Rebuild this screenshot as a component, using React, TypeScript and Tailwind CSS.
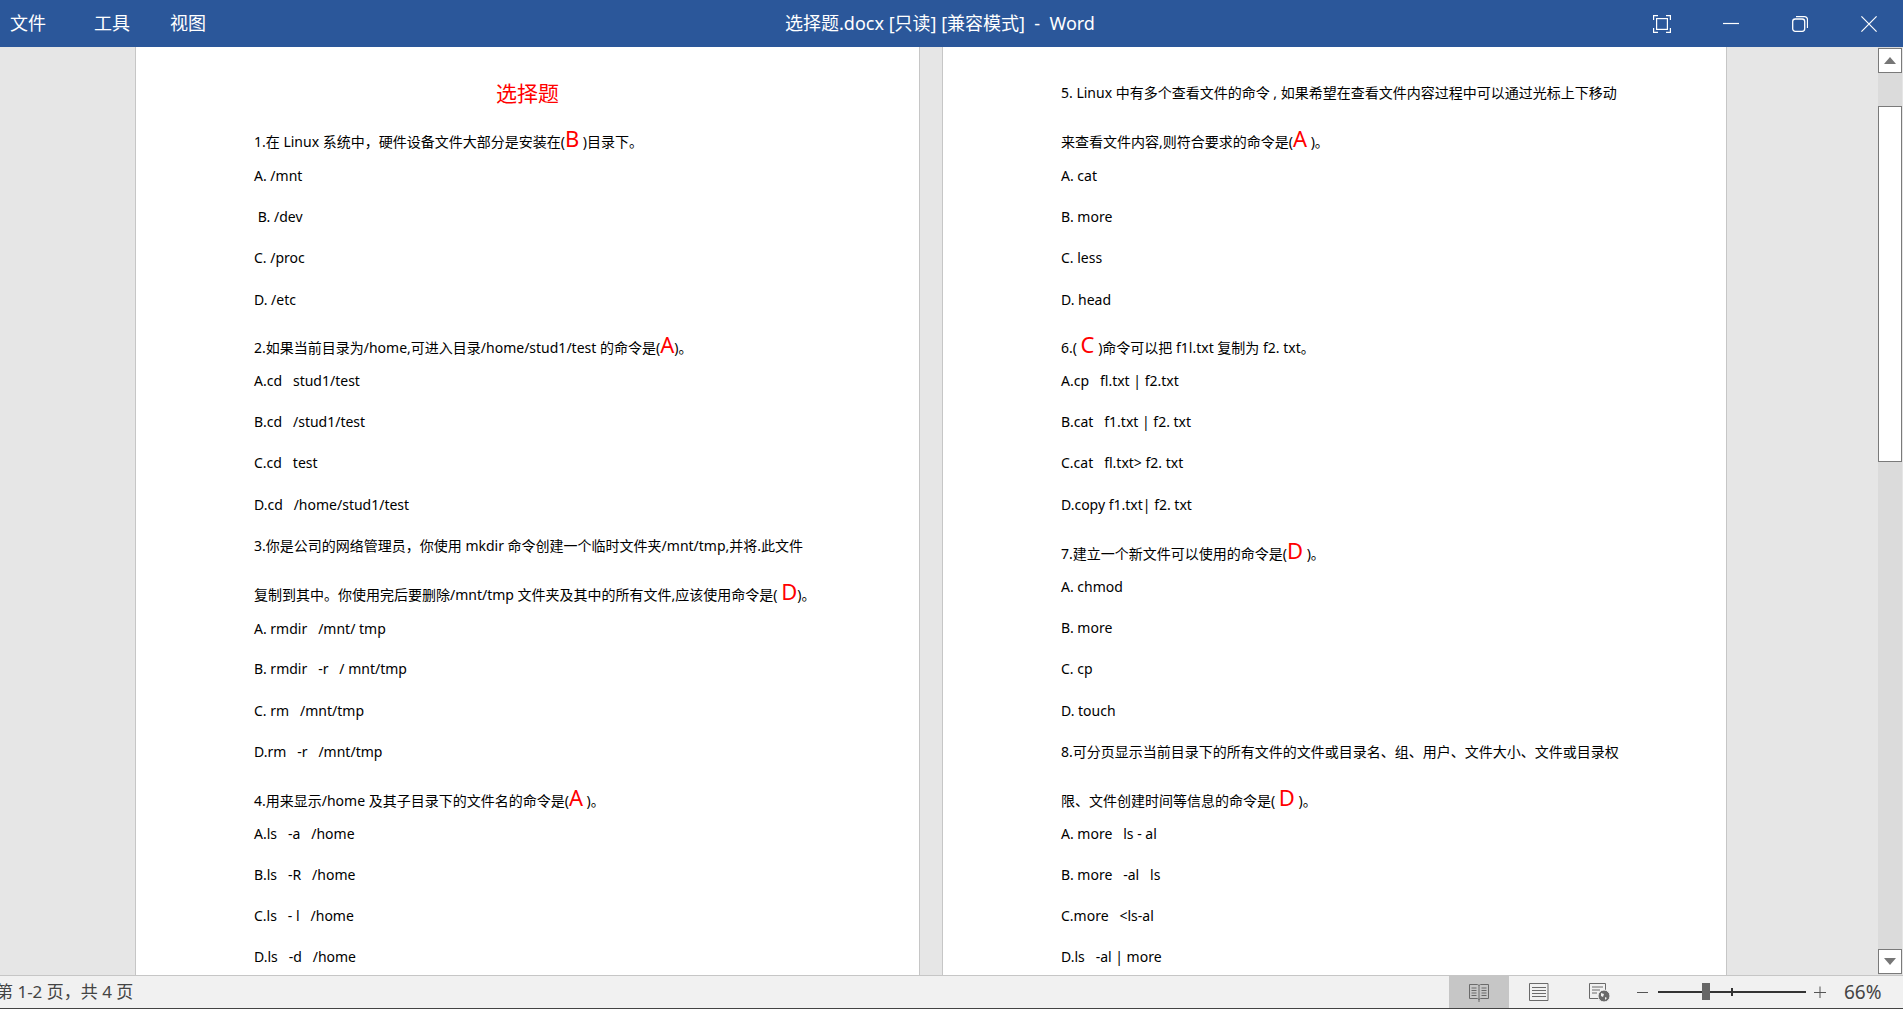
import React from 'react';

type Row = { h: string; text: React.ReactNode };

const Ans = ({ c }: { c: string }) => (
  <span className="text-[22px] leading-none text-[#ff0000]">{c}</span>
);

const leftRows: Row[] = [
  { h: 'h-[39px]', text: <>1.在 Linux 系统中，硬件设备文件大部分是安装在(<Ans c="B" /> )目录下。</> },
  { h: 'h-[41px]', text: 'A. /mnt' },
  { h: 'h-[41px]', text: <>&nbsp;B. /dev</> },
  { h: 'h-[42px]', text: 'C. /proc' },
  { h: 'h-[43px]', text: 'D. /etc' },
  { h: 'h-[38px]', text: <>2.如果当前目录为/home,可进入目录/home/stud1/test 的命令是(<Ans c="A" />)。</> },
  { h: 'h-[41px]', text: <>A.cd &nbsp; stud1/test</> },
  { h: 'h-[41px]', text: <>B.cd &nbsp; /stud1/test</> },
  { h: 'h-[42px]', text: <>C.cd &nbsp; test</> },
  { h: 'h-[41px]', text: <>D.cd &nbsp; /home/stud1/test</> },
  { h: 'h-[44px]', text: '3.你是公司的网络管理员，你使用 mkdir 命令创建一个临时文件夹/mnt/tmp,并将.此文件' },
  { h: 'h-[39px]', text: <>复制到其中。你使用完后要删除/mnt/tmp 文件夹及其中的所有文件,应该使用命令是( <Ans c="D" />)。</> },
  { h: 'h-[40px]', text: <>A. rmdir &nbsp; /mnt/ tmp</> },
  { h: 'h-[42px]', text: <>B. rmdir &nbsp; -r &nbsp; / mnt/tmp</> },
  { h: 'h-[41px]', text: <>C. rm &nbsp; /mnt/tmp</> },
  { h: 'h-[44px]', text: <>D.rm &nbsp; -r &nbsp; /mnt/tmp</> },
  { h: 'h-[38px]', text: <>4.用来显示/home 及其子目录下的文件名的命令是(<Ans c="A" /> )。</> },
  { h: 'h-[41px]', text: <>A.ls &nbsp; -a &nbsp; /home</> },
  { h: 'h-[41px]', text: <>B.ls &nbsp; -R &nbsp; /home</> },
  { h: 'h-[41px]', text: <>C.ls &nbsp; - l &nbsp; /home</> },
  { h: 'h-[41px]', text: <>D.ls &nbsp; -d &nbsp; /home</> },
];

const rightRows: Row[] = [
  { h: 'h-[44px]', text: '5. Linux 中有多个查看文件的命令 , 如果希望在查看文件内容过程中可以通过光标上下移动' },
  { h: 'h-[39px]', text: <>来查看文件内容,则符合要求的命令是(<Ans c="A" /> )。</> },
  { h: 'h-[41px]', text: 'A. cat' },
  { h: 'h-[41px]', text: 'B. more' },
  { h: 'h-[42px]', text: 'C. less' },
  { h: 'h-[43px]', text: 'D. head' },
  { h: 'h-[38px]', text: <>6.( <Ans c="C" /> )命令可以把 f1l.txt 复制为 f2. txt。</> },
  { h: 'h-[41px]', text: <>A.cp &nbsp; fl.txt | f2.txt</> },
  { h: 'h-[41px]', text: <>B.cat &nbsp; f1.txt | f2. txt</> },
  { h: 'h-[42px]', text: <>C.cat &nbsp; fl.txt&gt; f2. txt</> },
  { h: 'h-[44px]', text: 'D.copy f1.txt| f2. txt' },
  { h: 'h-[38px]', text: <>7.建立一个新文件可以使用的命令是(<Ans c="D" /> )。</> },
  { h: 'h-[41px]', text: 'A. chmod' },
  { h: 'h-[41px]', text: 'B. more' },
  { h: 'h-[42px]', text: 'C. cp' },
  { h: 'h-[41px]', text: 'D. touch' },
  { h: 'h-[44px]', text: '8.可分页显示当前目录下的所有文件的文件或目录名、组、用户、文件大小、文件或目录权' },
  { h: 'h-[38px]', text: <>限、文件创建时间等信息的命令是( <Ans c="D" /> )。</> },
  { h: 'h-[41px]', text: <>A. more &nbsp; ls - al</> },
  { h: 'h-[41px]', text: <>B. more &nbsp; -al &nbsp; ls</> },
  { h: 'h-[41px]', text: <>C.more &nbsp; &lt;ls-al</> },
  { h: 'h-[41px]', text: <>D.ls &nbsp; -al | more</> },
];

const DocRows = ({ rows }: { rows: Row[] }) => (
  <>
    {rows.map((r, i) => (
      <div key={i} className={`${r.h} whitespace-nowrap text-[14px] leading-[20px] text-black`}>
        {r.text}
      </div>
    ))}
  </>
);

function TitleBar() {
  return (
    <div className="flex h-[47px] shrink-0 items-center bg-[#2b579a] text-[18px] text-white">
      <div className="flex w-[785px] items-center pl-[10px]">
        <span className="w-[84px]">文件</span>
        <span className="w-[76px]">工具</span>
        <span>视图</span>
      </div>
      <div className="whitespace-pre">选择题.docx [只读] [兼容模式]  -  Word</div>
      <div className="ml-auto flex items-center pr-[26px]">
        <svg width="18" height="18" viewBox="0 0 18 18" fill="none" stroke="white" strokeWidth="1.2">
          <path d="M.6 5V.6H5M13 .6h4.4V5M17.4 13v4.4H13M5 17.4H.6V13" />
          <rect x="3.6" y="3.6" width="10.8" height="10.8" />
        </svg>
        <svg className="ml-[52px]" width="16" height="16" viewBox="0 0 16 16" stroke="white" strokeWidth="1.2">
          <path d="M0 7.5h16" />
        </svg>
        <svg className="ml-[53px]" width="16" height="16" viewBox="0 0 16 16" fill="none" stroke="white" strokeWidth="1.3">
          <rect x=".7" y="3" width="12" height="12.3" rx="2.5" />
          <path d="M4 .7h8.5a3 3 0 0 1 3 3V12" />
        </svg>
        <svg className="ml-[53px]" width="16" height="16" viewBox="0 0 16 16" stroke="white" strokeWidth="1.2">
          <path d="M.4.4l15.2 15.2M15.6.4L.4 15.6" />
        </svg>
      </div>
    </div>
  );
}

function ScrollBar() {
  return (
    <div className="mr-px flex w-[24px] shrink-0 flex-col bg-[#dbdbdb] pt-px">
      <div className="flex h-[25px] items-center justify-center border border-[#7a7a7a] bg-white">
        <svg width="12" height="7" viewBox="0 0 12 7" fill="#767676"><path d="M6 0l6 7H0z" /></svg>
      </div>
      <div className="h-[33px]" />
      <div className="h-[356px] border border-[#7a7a7a] bg-white" />
      <div className="flex-1" />
      <div className="mb-px flex h-[25px] items-center justify-center border border-[#7a7a7a] bg-white">
        <svg width="12" height="7" viewBox="0 0 12 7" fill="#767676"><path d="M6 7L0 0h12z" /></svg>
      </div>
    </div>
  );
}

function StatusBar() {
  return (
    <div className="flex h-[34px] shrink-0 items-center overflow-hidden border-t border-b border-t-[#c6c6c6] border-b-[#444444] bg-[#f1f1f1] text-[#444444]">
      <div className="ml-[-4px] whitespace-nowrap text-[17px]">第 1-2 页，共 4 页</div>
      <div className="ml-auto flex h-full items-center">
        <div className="flex h-full w-[60px] items-center justify-center bg-[#c6c6c6]">
          <svg width="20" height="20" viewBox="0 0 20 20" fill="none" stroke="#6a6a6a">
            <path d="M.5 2.5h8l1.5 1 1.5-1h8v14h-8L10 17.5 8.5 16.5h-8zM10 3.5V20" />
            <path d="M2.5 6h5M2.5 8.5h5M2.5 11h5M2.5 13.5h5M12.5 6h5M12.5 8.5h5M12.5 11h5M12.5 13.5h5" />
          </svg>
        </div>
        <div className="flex w-[60px] items-center justify-center">
          <svg width="20" height="20" viewBox="0 0 20 20" fill="none" stroke="#6a6a6a">
            <path d="M.5 1.5h18.500v17H.5zM3 5.500h14M3 8.500h14M3 11.500h14M3 14.500h14" />
          </svg>
        </div>
        <div className="flex w-[60px] items-center justify-center">
          <svg width="21" height="20" viewBox="0 0 21 20" fill="none" stroke="#6a6a6a">
            <path d="M.5 1.500h16v15H.5zM3 5h11M3 8h8M3 11h5" />
            <circle cx="15" cy="14" r="6" fill="#6a6a6a" stroke="#f1f1f1" />
            <path d="M12 11l3 1-1 3-2-1zM16 15l2 1-2 2z" fill="#f1f1f1" stroke="none" />
          </svg>
        </div>
        <svg className="ml-[8px]" width="12" height="12" viewBox="0 0 12 12" stroke="#555555"><path d="M0 6.500h11" /></svg>
        {/* zoom slider */}
        <div className="relative ml-[9px] h-[18px] w-[148px]">
          <div className="absolute left-0 right-0 top-[8px] h-[2px] bg-[#333333]" />
          <div className="absolute left-[73px] top-[5px] h-[8px] w-[2px] bg-[#333333]" />
          <div className="absolute left-[44px] top-0 h-[17px] w-[8px] bg-[#666666]" />
        </div>
        <svg className="ml-[8px]" width="12" height="12" viewBox="0 0 12 12" stroke="#555555"><path d="M0 6.500h12M6 .5v12" /></svg>
        <div className="ml-[18px] w-[59px] text-[19px]">66%</div>
      </div>
    </div>
  );
}

export default function App() {
  return (
    <div className="flex h-screen w-full flex-col overflow-hidden bg-[#e6e6e6] font-['Noto_Sans','Noto_Sans_CJK_SC',sans-serif]">
      <TitleBar />
      <div className="flex min-h-0 flex-1">
        <div className="flex min-w-0 flex-1 gap-[22px] overflow-hidden pl-[135px]">
          <div className="w-[785px] shrink-0 border-x border-[#c6c6c6] bg-white pl-[118px] pt-[32px]">
            <div className="h-[48px] pr-[118px] text-center text-[21px] leading-[28px] text-[#ff0000]">选择题</div>
            <DocRows rows={leftRows} />
          </div>
          <div className="w-[785px] shrink-0 border-x border-[#c6c6c6] bg-white pl-[118px] pt-[36px]">
            <DocRows rows={rightRows} />
          </div>
        </div>
        <ScrollBar />
      </div>
      <StatusBar />
    </div>
  );
}
